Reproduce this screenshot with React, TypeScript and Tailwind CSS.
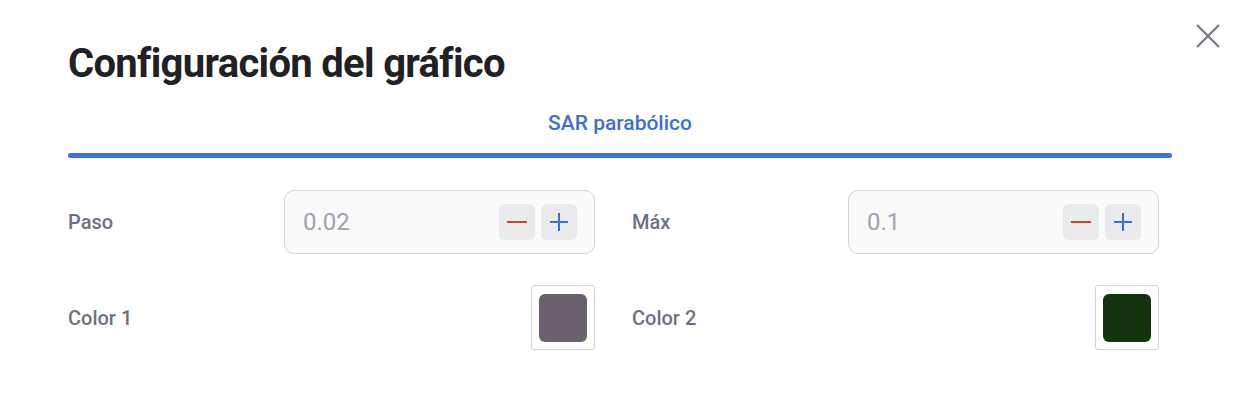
import React from 'react';

const font = { fontFamily: 'Roboto, "Noto Sans", sans-serif' };

const NumberField: React.FC<{ label: string; value: string }> = ({ label, value }) => (
  <div className="flex items-center justify-between h-[64px]">
    <span className="text-[20px] font-medium text-[#6b7280]">{label}</span>
    <div className="w-[311px] h-[64px] rounded-[10px] border border-[#d2d3d7] bg-[#fafafa] flex items-center pl-[18px] pr-[17px]">
      <span className="flex-1 text-[24px] text-[#9ca3af]">{value}</span>
      <div className="flex gap-[6px]">
        <button className="w-[36px] h-[36px] rounded-[6px] bg-[#e9eaec] flex items-center justify-center">
          <span className="block w-[20px] h-[2px] bg-[#c9472d]" />
        </button>
        <button className="w-[36px] h-[36px] rounded-[6px] bg-[#e9eaec] flex items-center justify-center">
          <svg width="20" height="20" viewBox="0 0 20 20">
            <path d="M10 1v18M1 10h18" stroke="#3a6fd3" strokeWidth="2" />
          </svg>
        </button>
      </div>
    </div>
  </div>
);

const ColorField: React.FC<{ label: string; color: string }> = ({ label, color }) => (
  <div className="flex items-center justify-between h-[65px]">
    <span className="text-[20px] font-medium text-[#6b7280]">{label}</span>
    <div className="w-[64px] h-[65px] rounded-[3px] border border-[#d2d3d7] bg-white flex items-center justify-center">
      <div className="w-[48px] h-[48px] rounded-[6px]" style={{ backgroundColor: color }} />
    </div>
  </div>
);

export default function App() {
  return (
    <div className="relative w-full h-[406px] bg-white pl-[68px] pr-[72px]" style={font}>
      <button className="absolute top-[24px] right-[24px] w-[24px] h-[24px]">
        <svg width="24" height="24" viewBox="0 0 24 24">
          <path d="M1 1l22 22M23 1L1 23" stroke="#70757d" strokeWidth="2" />
        </svg>
      </button>

      <h1 className="pt-[40px] text-[40px] leading-[48px] font-bold text-[#1f2124] tracking-[-0.7px]">
        Configuración del gráfico
      </h1>

      {/* Pestañas */}
      <div className="mt-[23px]">
        <div className="text-center text-[21px] leading-[24px] font-medium text-[#3b6fd6]">SAR parabólico</div>
        <div className="mt-[18px] h-[5px] rounded-full bg-[#3f73d6]" />
      </div>

      <div className="mt-[32px] grid grid-cols-[527px_527px] gap-x-[37px] gap-y-[31px]">
        <NumberField label="Paso" value="0.02" />
        <NumberField label="Máx" value="0.1" />
        <ColorField label="Color 1" color="#6b606e" />
        <ColorField label="Color 2" color="#12330c" />
      </div>
    </div>
  );
}
